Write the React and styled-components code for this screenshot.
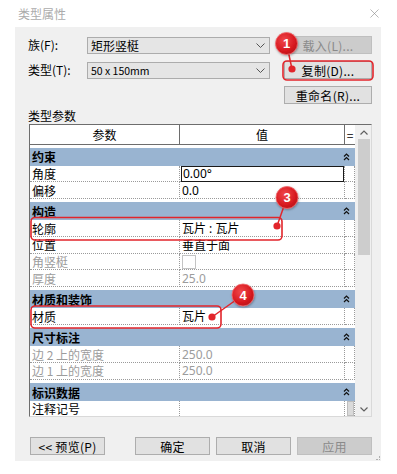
import React from "react";
import styled, { createGlobalStyle } from "styled-components";
import { X } from "lucide-react";

const GlobalStyle = createGlobalStyle`
  html, body {
    margin: 0;
    padding: 0;
    background: #ffffff;
  }
  body {
    font-family: "Noto Sans CJK SC", "Noto Sans", sans-serif;
    font-size: 12px;
    color: #000;
  }
`;

const Window = styled.div`
  position: relative;
  width: 397px;
  height: 474px;
  background: #fff;
  overflow: hidden;
`;

const TitleBar = styled.div`
  height: 27px;
  display: flex;
  align-items: center;
  justify-content: space-between;
  padding: 0 18px 0 18px;
  box-sizing: border-box;
  color: #ababab;
  font-size: 12px;
`;

const CloseIcon = styled(X)`
  color: #8a8a8a;
  margin-right: -3px;
`;

const Panel = styled.div`
  margin-left: 15px;
  width: 366px;
  height: 434px;
  background: #f0f0f0;
  padding: 9px 9px 0 13px;
  box-sizing: border-box;
  display: flex;
  flex-direction: column;
  position: relative;
`;

const Grip = styled.div`
  position: absolute;
  right: 1px;
  bottom: 1px;
  width: 3px;
  height: 3px;
  border-right: 1px dotted #b0b0b0;
  border-bottom: 1px dotted #b0b0b0;
`;

const Form = styled.div`
  display: grid;
  grid-template-columns: 59px 183px 14px 88px;
  grid-auto-rows: 18px;
  row-gap: 7px;
  align-items: center;
`;

const Label = styled.div`
  font-size: 12px;
  line-height: 18px;
  grid-column: 1;
`;

const Combo = styled.div`
  grid-column: 2;
  height: 17px;
  background: #e5e5e5;
  border: 1px solid #acacac;
  box-sizing: border-box;
  display: flex;
  align-items: center;
  justify-content: space-between;
  padding: 0 4px 0 3px;
  font-size: ${(p) => (p.$small ? "10.5px" : "12px")};
  line-height: 15px;
`;

const Chevron = () => (
  <svg width="9" height="5" viewBox="0 0 9 5">
    <polyline points="0.5,0.5 4.5,4.5 8.5,0.5" fill="none" stroke="#555" strokeWidth="1" />
  </svg>
);

const Button = styled.div`
  grid-column: ${(p) => p.$col || "auto"};
  height: 18px;
  box-sizing: border-box;
  display: flex;
  align-items: center;
  justify-content: center;
  background: ${(p) => (p.$disabled ? "#cccccc" : "#e1e1e1")};
  border: 1px solid ${(p) => (p.$disabled ? "#bfbfbf" : "#adadad")};
  color: ${(p) => (p.$disabled ? "#8a8a8a" : "#000")};
  font-size: 12px;
  letter-spacing: 0.3px;
  width: ${(p) => p.$width || "auto"};
`;

const SectionTitle = styled.div`
  margin-top: 3px;
  height: 17px;
  line-height: 17px;
  font-size: 12px;
`;

const TableBox = styled.div`
  margin-left: 1px;
  width: 343px;
  height: 293px;
  box-sizing: border-box;
  border: 1px solid #d9d9d9;
  border-top-color: #6d6d6d;
  border-left-color: #6d6d6d;
  display: flex;
`;

const Grid = styled.div`
  width: 325px;
  height: 291px;
  overflow: hidden;
  background: #fff;
  display: grid;
  grid-template-columns: 150px 165px 10px;
  align-content: start;
`;

const HeadCell = styled.div`
  height: 20px;
  box-sizing: border-box;
  border-bottom: 1px solid #6d6d6d;
  border-right: ${(p) => (p.$last ? "none" : "1px solid #6d6d6d")};
  display: flex;
  align-items: center;
  justify-content: center;
  font-size: 12px;
  background: #fff;
`;

const Band = styled.div`
  grid-column: 1 / -1;
  height: 18px;
  margin-top: ${(p) => (p.$first ? "2.7px" : "3.3px")};
  background: #99b4d1;
  display: flex;
  align-items: center;
  justify-content: space-between;
  padding: 0 5px 0 2px;
  font-weight: bold;
  font-size: 12px;
`;

const Cell = styled.div`
  height: 16.7px;
  box-sizing: border-box;
  border-bottom: 1px dotted #9a9a9a;
  border-right: 1px dotted #9a9a9a;
  display: flex;
  align-items: center;
  padding-left: 2px;
  font-family: ${(p) =>
    p.$value ? '"Noto Sans", "Noto Sans CJK SC", sans-serif' : '"Noto Sans CJK SC", sans-serif'};
  font-size: 12px;
  color: ${(p) => (p.$muted ? "#9c9c9c" : "#000")};
  white-space: nowrap;
`;

const EditBox = styled.div`
  margin-left: -1px;
  width: 163px;
  height: 16px;
  box-sizing: border-box;
  border: 1px solid #1a1a1a;
  padding-left: 1px;
  display: flex;
  align-items: center;
`;

const CheckBox = styled.div`
  width: 12px;
  height: 12px;
  border: 1px solid #c4c4c4;
  background: #fff;
`;

const MiniButton = styled.div`
  width: 9px;
  height: 15px;
  background: #dadada;
  border: 1px solid #bdbdbd;
  box-sizing: border-box;
`;

const ScrollBar = styled.div`
  margin-left: 2px;
  width: 14px;
  height: 291px;
  background: #f0f0f0;
  display: flex;
  flex-direction: column;
  align-items: center;
`;

const ScrollArrow = styled.div`
  height: 14px;
  width: 14px;
  display: flex;
  align-items: center;
  justify-content: center;
`;

const Thumb = styled.div`
  width: 12px;
  height: 116px;
  background: #cdcdcd;
`;

const Track = styled.div`
  flex: 1;
`;

const Footer = styled.div`
  margin-top: 20px;
  margin-left: 2px;
  width: 342px;
  display: flex;
  justify-content: space-between;
`;

const FooterGroup = styled.div`
  display: flex;
  gap: 6px;
`;

const Overlay = styled.svg`
  position: absolute;
  left: 0;
  top: 0;
  pointer-events: none;
`;

const UpDouble = () => (
  <svg width="7" height="8" viewBox="0 0 7 8">
    <polyline points="1,3.5 3.5,1 6,3.5" fill="none" stroke="#111" strokeWidth="1.2" />
    <polyline points="1,7 3.5,4.5 6,7" fill="none" stroke="#111" strokeWidth="1.2" />
  </svg>
);

const groups = [
  {
    title: "约束",
    rows: [
      { name: "角度", value: "0.00°", edit: true },
      { name: "偏移", value: "0.0" },
    ],
  },
  {
    title: "构造",
    rows: [
      { name: "轮廓", value: "瓦片 : 瓦片" },
      { name: "位置", value: "垂直于面" },
      { name: "角竖梃", check: true, muted: true },
      { name: "厚度", value: "25.0", muted: true },
    ],
  },
  {
    title: "材质和装饰",
    rows: [{ name: "材质", value: "瓦片" }],
  },
  {
    title: "尺寸标注",
    rows: [
      { name: "边 2 上的宽度", value: "250.0", muted: true },
      { name: "边 1 上的宽度", value: "250.0", muted: true },
    ],
  },
  {
    title: "标识数据",
    rows: [{ name: "注释记号", value: "", mini: true }],
  },
];

const badges = [
  { n: "1", cx: 286.5, cy: 43.5, dx: 292, dy: 69 },
  { n: "3", cx: 287, cy: 197.5, dx: 277, dy: 226 },
  { n: "4", cx: 243, cy: 295, dx: 212, dy: 317 },
];

const Annotations = () => (
  <Overlay width="397" height="474" viewBox="0 0 397 474">
    <defs>
      <radialGradient id="bg" cx="40%" cy="35%" r="70%">
        <stop offset="0%" stopColor="#f0474b" />
        <stop offset="70%" stopColor="#d7191f" />
        <stop offset="100%" stopColor="#b5141a" />
      </radialGradient>
      <filter id="sh" x="-50%" y="-50%" width="200%" height="200%">
        <feDropShadow dx="0.5" dy="1" stdDeviation="1" floodColor="#000" floodOpacity="0.35" />
      </filter>
    </defs>
    <g fill="none" stroke="#e2252b" strokeWidth="1.6">
      <rect x="283" y="61" width="90" height="19" rx="4" />
      <rect x="31" y="217.5" width="251" height="22.5" rx="4" />
      <rect x="31" y="306" width="190" height="22" rx="4" />
    </g>
    {badges.map((b) => (
      <g key={b.n}>
        <line x1={b.cx} y1={b.cy} x2={b.dx} y2={b.dy} stroke="#e2252b" strokeWidth="1.5" />
        <circle cx={b.dx} cy={b.dy} r="3.6" fill="#e2252b" />
        <circle cx={b.cx} cy={b.cy} r="11" fill="url(#bg)" stroke="#f36b6e" strokeWidth="0.8" filter="url(#sh)" />
        <text
          x={b.cx}
          y={b.cy + 4.5}
          textAnchor="middle"
          fill="#fff"
          fontSize="13"
          fontWeight="bold"
          fontFamily="'Liberation Sans', sans-serif"
        >
          {b.n}
        </text>
      </g>
    ))}
  </Overlay>
);

export default function App() {
  return (
    <Window>
      <GlobalStyle />
      <TitleBar>
        <span>类型属性</span>
        <CloseIcon size={15} strokeWidth={1} />
      </TitleBar>
      <Panel>
        <Form>
          <Label>族(F):</Label>
          <Combo>
            <span>矩形竖梃</span>
            <Chevron />
          </Combo>
          <Button $col={4} $disabled>载入(L)...</Button>
          <Label>类型(T):</Label>
          <Combo $small>
            <span>50 x 150mm</span>
            <Chevron />
          </Combo>
          <Button $col={4}>复制(D)...</Button>
          <Button $col={4}>重命名(R)...</Button>
        </Form>
        <SectionTitle>类型参数</SectionTitle>
        <TableBox>
          <Grid>
            <HeadCell>参数</HeadCell>
            <HeadCell>值</HeadCell>
            <HeadCell $last>=</HeadCell>
            {groups.map((g, gi) => (
              <React.Fragment key={g.title}>
                <Band $first={gi === 0}>
                  <span>{g.title}</span>
                  <UpDouble />
                </Band>
                {g.rows.map((r) => (
                  <React.Fragment key={r.name}>
                    <Cell $muted={r.muted}>{r.name}</Cell>
                    <Cell $value $muted={r.muted}>
                      {r.edit ? <EditBox>{r.value}</EditBox> : r.check ? <CheckBox /> : r.value}
                    </Cell>
                    <Cell>{r.mini && <MiniButton />}</Cell>
                  </React.Fragment>
                ))}
              </React.Fragment>
            ))}
          </Grid>
          <ScrollBar>
            <ScrollArrow>
              <svg width="8" height="5" viewBox="0 0 8 5">
                <polyline points="0.5,4.5 4,1 7.5,4.5" fill="none" stroke="#606060" strokeWidth="1.2" />
              </svg>
            </ScrollArrow>
            <Thumb />
            <Track />
            <ScrollArrow>
              <svg width="8" height="5" viewBox="0 0 8 5">
                <polyline points="0.5,0.5 4,4 7.5,0.5" fill="none" stroke="#606060" strokeWidth="1.2" />
              </svg>
            </ScrollArrow>
          </ScrollBar>
        </TableBox>
        <Footer>
          <Button $width="75px">&lt;&lt; 预览(P)</Button>
          <FooterGroup>
            <Button $width="75px">确定</Button>
            <Button $width="75px">取消</Button>
            <Button $width="75px" $disabled>应用</Button>
          </FooterGroup>
        </Footer>
        <Grip />
      </Panel>
      <Annotations />
    </Window>
  );
}
